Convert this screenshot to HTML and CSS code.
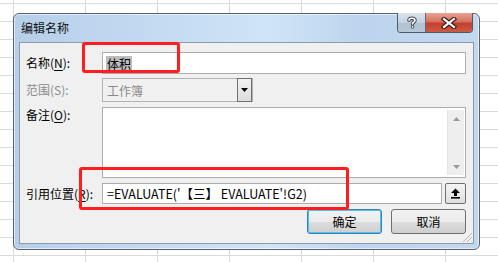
FILE: index.html
```html
<!DOCTYPE html>
<html lang="zh">
<head>
<meta charset="utf-8">
<link rel="stylesheet" href="styles.css">
</head>
<body>
<div class="dialog">
  <div class="titlebar">
    <span class="title">编辑名称</span>
    <div class="caption-btns">
      <div class="cap help"><svg width="12" height="13" viewBox="0 0 12 13"><path d="M3 4.2 C3 1.5 9 1.5 9 4.2 C9 6 6.5 6 6.5 8" fill="none" stroke="#3a4654" stroke-width="3.6" stroke-linecap="round"/><path d="M3 4.2 C3 1.5 9 1.5 9 4.2 C9 6 6.5 6 6.5 8" fill="none" stroke="#fff" stroke-width="1.6" stroke-linecap="round"/><circle cx="6.5" cy="11" r="1.8" fill="#3a4654"/><circle cx="6.5" cy="11" r="0.9" fill="#fff"/></svg></div>
      <div class="cap close"><svg width="16" height="12" viewBox="0 0 16 12"><path d="M3 2 L13 10 M13 2 L3 10" stroke="#3b1a14" stroke-width="4.4" stroke-linecap="square"/><path d="M3 2 L13 10 M13 2 L3 10" stroke="#fff" stroke-width="2.2" stroke-linecap="square"/></svg></div>
    </div>
  </div>
  <div class="client">
    <div class="row r1">
      <label class="lbl">名称(<u>N</u>):</label>
      <div class="field"><span class="sel">体积</span></div>
    </div>
    <div class="row r2">
      <label class="lbl dis">范围(S):</label>
      <div class="combo"><span class="combo-text">工作簿</span><span class="drop"><svg width="7" height="4" viewBox="0 0 7 4"><path d="M0 0 H7 L3.5 4 Z" fill="#000"/></svg></span></div>
    </div>
    <div class="row r3">
      <label class="lbl top">备注(<u>O</u>):</label>
      <div class="memo"><div class="vscroll"><svg width="7" height="4" viewBox="0 0 7 4"><path d="M0 4 H7 L3.5 0 Z" fill="#9a9a9a"/></svg><svg width="7" height="4" viewBox="0 0 7 4"><path d="M0 0 H7 L3.5 4 Z" fill="#9a9a9a"/></svg></div></div>
    </div>
    <div class="row r4">
      <label class="lbl">引用位置(<u>R</u>):</label>
      <div class="field ref">=EVALUATE('【三】 EVALUATE'!G2)</div>
      <div class="collapse"><svg width="11" height="11" viewBox="0 0 11 11"><path d="M5.5 0.5 L10 5 H7 V8 H4 V5 H1 Z" fill="#000"/><rect x="1" y="9" width="9" height="1.6" fill="#000"/></svg></div>
    </div>
    <div class="row r5">
      <button class="btn default">确定</button>
      <button class="btn">取消</button>
    </div>
    <div class="grip"></div>
    <div class="mark m1"></div>
    <div class="mark m2"></div>
  </div>
</div>
</body>
</html>
```

FILE: styles.css
```css
html, body {
  margin: 0;
  padding: 0;
}
body {
  width: 498px;
  height: 262px;
  overflow: hidden;
  background-color: #ffffff;
  background-image:
    linear-gradient(to right, #d8dadc 1px, transparent 1px),
    linear-gradient(to bottom, #d8dadc 1px, transparent 1px);
  background-size: 72px 18px;
  background-position: 13px 3px;
  font-family: "Noto Sans CJK SC", "Microsoft YaHei", sans-serif;
  font-size: 12px;
  color: #000;
}
.dialog {
  position: relative;
  margin: 13px 0 0 13px;
  width: 467px;
  height: 237px;
  box-sizing: border-box;
  border: 1px solid #58626e;
  border-radius: 6px;
  background: linear-gradient(to right, #b6cfe9 0%, #c3daf1 30%, #cfe4f7 55%, #bcd4ed 75%, #c2d8ef 100%);
  padding: 0 5px 5px 5px;
  display: flex;
  flex-direction: column;
  box-shadow: inset 0 0 0 1px rgba(255,255,255,0.6);
}
.titlebar {
  height: 28px;
  flex: none;
  display: flex;
  align-items: center;
  position: relative;
}
.title {
  margin-left: 2px;
  font-size: 12px;
  color: #111;
  line-height: 14px;
}
.caption-btns {
  position: absolute;
  top: -1px;
  right: 1px;
  display: flex;
  height: 19px;
  border: 1px solid #4f5a67;
  border-top: none;
  border-radius: 0 0 4px 4px;
  overflow: hidden;
}
.cap {
  display: flex;
  align-items: center;
  justify-content: center;
  height: 100%;
}
.help {
  width: 27px;
  background: linear-gradient(to bottom, #dbe4ee 0%, #c4d1de 50%, #b1c1d2 55%, #b8c8d8 100%);
  border-right: 1px solid #5d6a78;
}
.close {
  width: 46px;
  background: linear-gradient(to bottom, #e8a596 0%, #d6705c 45%, #c2402b 55%, #cd5a44 100%);
}
.client {
  position: relative;
  flex: 1;
  background: #f0f0f0;
  border: 1px solid #8d9cab;
  padding: 9px 7px 0 6px;
  display: flex;
  flex-direction: column;
}
.row {
  display: flex;
  align-items: center;
}
.lbl {
  width: 76px;
  flex: none;
  white-space: nowrap;
  line-height: 16px;
}
.lbl u {
  text-decoration-thickness: 1px;
  text-underline-offset: 2px;
}
.lbl.dis { color: #8c8c8c; }
.lbl.top { align-self: flex-start; margin-top: 0; }
.r1 { height: 22px; }
.r2 { height: 24px; margin-top: 4px; }
.r3 { height: 71px; margin-top: 5px; }
.r4 { height: 21px; margin-top: 5px; }
.r5 { height: 25px; margin-top: 5px; justify-content: flex-end; gap: 9px; }
.field {
  flex: 1;
  height: 100%;
  box-sizing: border-box;
  background: #fff;
  border: 1px solid #acacac;
  display: flex;
  align-items: center;
  padding-left: 3px;
}
.sel {
  background: #bdbdbd;
  line-height: 15px;
  padding: 0 1px;
}
.combo {
  width: 151px;
  height: 100%;
  box-sizing: border-box;
  border: 1px solid #b3b3b3;
  background: #f0f0f0;
  display: flex;
  align-items: center;
  justify-content: space-between;
}
.combo-text {
  color: #8a8a8a;
  padding-left: 4px;
}
.drop {
  width: 15px;
  box-sizing: border-box;
  border: 1px solid #707070;
  background: linear-gradient(to bottom, #f2f2f2, #dcdcdc);
  display: flex;
  align-items: center;
  justify-content: center;
  margin-top: -2px;
  margin-bottom: -2px;
  height: 24px;
}
.memo {
  flex: 1;
  height: 100%;
  box-sizing: border-box;
  background: #fff;
  border: 1px solid #acacac;
  display: flex;
  justify-content: flex-end;
  padding: 2px 1px 2px 0;
}
.vscroll {
  width: 16px;
  background: #eeeeee;
  border-left: 1px solid #e4e4e4;
  display: flex;
  flex-direction: column;
  justify-content: space-between;
  align-items: center;
  padding: 7px 0 6px;
}
.ref {
  font-size: 12.5px;
  padding-left: 4px;
  white-space: nowrap;
}
.collapse {
  width: 21px;
  height: 21px;
  box-sizing: border-box;
  margin-left: 3px;
  border: 1px solid #707070;
  border-radius: 2px;
  background: linear-gradient(to bottom, #f4f4f4, #dedede);
  display: flex;
  align-items: center;
  justify-content: center;
}
.btn {
  width: 75px;
  height: 25px;
  box-sizing: border-box;
  border: 1px solid #707070;
  border-radius: 3px;
  background: linear-gradient(to bottom, #f2f2f2 0%, #ebebeb 50%, #dddddd 51%, #cfcfcf 100%);
  font-family: "Noto Sans CJK SC", sans-serif;
  font-size: 12px;
  color: #000;
  padding: 0;
}
.btn.default {
  border-color: #3c7fb1;
  box-shadow: inset 0 0 0 1px #48c2f9;
}
.grip {
  position: absolute;
  right: 1px;
  bottom: 1px;
  width: 10px;
  height: 10px;
  background: linear-gradient(135deg, transparent 50%, #b7b7b7 50%, #b7b7b7 58%, transparent 58%, transparent 70%, #b7b7b7 70%, #b7b7b7 78%, transparent 78%);
}
.mark {
  position: absolute;
  border: 3px solid #ff1d1d;
  border-radius: 3px;
  box-sizing: border-box;
}
.m1 { left: 62px; top: -1px; width: 98px; height: 31px; }
.m2 { left: 59px; top: 124px; width: 270px; height: 43px; }
```
